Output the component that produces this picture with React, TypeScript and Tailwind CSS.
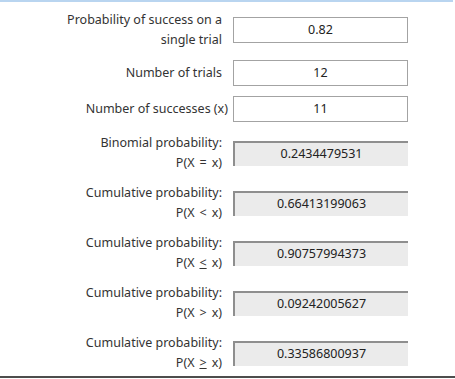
const inputs = [
  { label: ['Probability of success on a', 'single trial'], value: '0.82' },
  { label: ['Number of trials'], value: '12' },
  { label: ['Number of successes (x)'], value: '11', nudge: true },
];

const results = [
  { title: 'Binomial probability:', sym: '=', under: false, value: '0.2434479531' },
  { title: 'Cumulative probability:', sym: '<', under: false, value: '0.66413199063' },
  { title: 'Cumulative probability:', sym: '<', under: true, value: '0.90757994373' },
  { title: 'Cumulative probability:', sym: '>', under: false, value: '0.09242005627' },
  { title: 'Cumulative probability:', sym: '>', under: true, value: '0.33586800937' },
];

function App() {
  return (
    <div
      className="w-[455px] h-[379px] bg-white flex flex-col text-[12.5px] text-[#333333]"
      style={{ fontFamily: '"Noto Sans", "Open Sans", sans-serif' }}
    >
      <div className="h-[2px] w-[453px] bg-[#b9d5f0]" />
      <div className="flex-1 flex flex-col pt-[8px]">
        {inputs.map((row, i) => (
          <div key={i} className={`flex items-center ${i > 0 ? 'mt-[10px]' : ''}`}>
            <div className="w-[222px] text-right leading-[20px]">
              {row.label.map((l, j) => (
                <div key={j} className={row.nudge ? '-mr-[6px]' : ''}>{l}</div>
              ))}
            </div>
            <div className="ml-[11px] w-[175px] h-[26px] border border-[#a3a3a3] bg-white flex items-center justify-center text-[#222222]">
              {row.value}
            </div>
          </div>
        ))}
        {results.map((row, i) => (
          <div key={i} className={`flex items-center ${i === 0 ? 'mt-[11px]' : 'mt-[10px]'}`}>
            <div className="w-[222px] text-right leading-[20px]">
              <div>{row.title}</div>
              <div>
                P(X
                <span className={`mx-[5px] ${row.under ? 'underline' : ''}`}>{row.sym}</span>x)
              </div>
            </div>
            <div className="ml-[11px] w-[175px] h-[25px] border-t-2 border-l-2 border-[#8e8e8e] bg-[#ebebeb] flex items-center justify-center text-[#222222]">
              {row.value}
            </div>
          </div>
        ))}
      </div>
      <div className="h-[2px] bg-[#4d4d4d] mb-[1px]" />
    </div>
  );
}

export default App;
